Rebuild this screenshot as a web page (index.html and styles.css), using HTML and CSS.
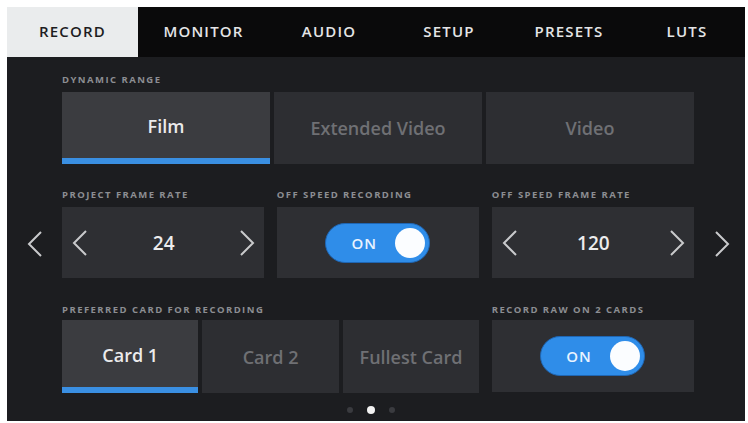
FILE: index.html
```html
<!DOCTYPE html>
<html>
<head>
<meta charset="utf-8">
<link rel="stylesheet" href="styles.css">
</head>
<body>
<div class="screen">
  <nav class="tabs">
    <div class="tab active">RECORD</div>
    <div class="tab">MONITOR</div>
    <div class="tab">AUDIO</div>
    <div class="tab">SETUP</div>
    <div class="tab">PRESETS</div>
    <div class="tab">LUTS</div>
  </nav>
  <main class="content">
    <section class="field sec1">
      <div class="label">DYNAMIC RANGE</div>
      <div class="seg seg3">
        <div class="btn on">Film</div>
        <div class="btn">Extended Video</div>
        <div class="btn">Video</div>
      </div>
    </section>

    <div class="nav left">
      <svg width="16" height="26" viewBox="0 0 16 26"><path d="M14 1 L2 13 L14 25" fill="none" stroke="#c9cacc" stroke-width="2"/></svg>
    </div>
    <section class="row2">
      <div class="field">
        <div class="label">PROJECT FRAME RATE</div>
        <div class="box stepper">
          <svg width="16" height="26" viewBox="0 0 16 26"><path d="M14 1 L2 13 L14 25" fill="none" stroke="#c9cacc" stroke-width="2"/></svg>
          <span class="val">24</span>
          <svg width="16" height="26" viewBox="0 0 16 26"><path d="M2 1 L14 13 L2 25" fill="none" stroke="#c9cacc" stroke-width="2"/></svg>
        </div>
      </div>
      <div class="field">
        <div class="label">OFF SPEED RECORDING</div>
        <div class="box center">
          <div class="toggle"><span>ON</span><i class="knob"></i></div>
        </div>
      </div>
      <div class="field">
        <div class="label">OFF SPEED FRAME RATE</div>
        <div class="box stepper">
          <svg width="16" height="26" viewBox="0 0 16 26"><path d="M14 1 L2 13 L14 25" fill="none" stroke="#c9cacc" stroke-width="2"/></svg>
          <span class="val">120</span>
          <svg width="16" height="26" viewBox="0 0 16 26"><path d="M2 1 L14 13 L2 25" fill="none" stroke="#c9cacc" stroke-width="2"/></svg>
        </div>
      </div>
    </section>
    <div class="nav right">
      <svg width="16" height="26" viewBox="0 0 16 26"><path d="M2 1 L14 13 L2 25" fill="none" stroke="#c9cacc" stroke-width="2"/></svg>
    </div>

    <section class="row3">
      <div class="field span2">
        <div class="label">PREFERRED CARD FOR RECORDING</div>
        <div class="seg seg3 cards">
          <div class="btn on">Card 1</div>
          <div class="btn">Card 2</div>
          <div class="btn">Fullest Card</div>
        </div>
      </div>
      <div class="field">
        <div class="label">RECORD RAW ON 2 CARDS</div>
        <div class="box center tall">
          <div class="toggle"><span>ON</span><i class="knob"></i></div>
        </div>
      </div>
    </section>

    <div class="dots"><i></i><i class="cur"></i><i></i></div>
  </main>
</div>
</body>
</html>
```

FILE: styles.css
```css
* { box-sizing: border-box; }
html, body { margin: 0; padding: 0; background: #ffffff; }
body { font-family: "Open Sans", "Liberation Sans", sans-serif; }

.screen {
  margin: 7px 0 0 7px;
  width: 738px;
  height: 414px;
  background: #1c1d20;
  overflow: hidden;
}

.tabs {
  display: grid;
  grid-template-columns: 131px 131px 120px 120px 120px 116px;
  height: 50px;
  background: #0a0a0b;
}
.tab {
  display: flex;
  align-items: center;
  justify-content: center;
  color: #e4e5e6;
  font-size: 15px;
  font-weight: 600;
  letter-spacing: 1.2px;
  padding-bottom: 2px;
}
.tab.active { background: #eaeced; color: #1d1d1f; }

.content {
  display: grid;
  grid-template-columns: 55px 632px 51px;
  padding-top: 17px;
}
.sec1 { grid-column: 2; grid-row: 1; }
.nav.left { grid-column: 1; grid-row: 2; }
.row2 { grid-column: 2; grid-row: 2; margin-top: 25px; }
.nav.right { grid-column: 3; grid-row: 2; }
.row3 { grid-column: 2; grid-row: 3; margin-top: 26px; }
.dots { grid-column: 2; grid-row: 4; }

.nav {
  margin-top: 25px;
  display: flex;
  align-items: flex-end;
  padding-bottom: 21px;
}
.nav.left { justify-content: flex-end; padding-right: 19px; }
.nav.right { padding-left: 20px; }

.field { display: flex; flex-direction: column; }
.label {
  color: #8c8e92;
  font-size: 9.5px;
  font-weight: 700;
  letter-spacing: 1.45px;
  line-height: 12px;
  height: 12px;
  margin-bottom: 6px;
  white-space: nowrap;
}
.row3 .label { margin-bottom: 4px; }

.seg { display: grid; gap: 4px; }
.seg3 { grid-template-columns: repeat(3, 1fr); }
.btn {
  height: 72px;
  background: #2d2e32;
  color: #6f7074;
  font-size: 18px;
  font-weight: 600;
  display: flex;
  align-items: center;
  justify-content: center;
}
.btn.on {
  background: #3b3c40;
  color: #ebebec;
  border-bottom: 6px solid #3a8fe2;
  padding-top: 2px;
}
.cards .btn { height: 73px; }
.cards .btn.on { padding-top: 3px; }

.row2, .row3 {
  display: grid;
  grid-template-columns: repeat(3, 1fr);
  column-gap: 12.5px;
}
.span2 { grid-column: span 2; }

.box {
  height: 71px;
  background: #2e2f33;
  display: flex;
  align-items: center;
}
.box.tall { height: 72px; }
.center { justify-content: center; }
.stepper { justify-content: space-between; padding: 0 9px 0 10px; }
.val { color: #ececed; font-size: 19px; font-weight: 600; }

.toggle {
  width: 105px;
  height: 40px;
  border-radius: 20px;
  background: #2f8de9;
  border: 1px solid #1f66b3;
  display: flex;
  align-items: center;
  justify-content: space-between;
  padding: 0 4px 0 25px;
}
.toggle span {
  color: #e9f3ff;
  font-size: 15px;
  font-weight: 600;
  letter-spacing: 1px;
}
.knob {
  width: 30px;
  height: 30px;
  border-radius: 50%;
  background: #fbfdff;
  display: block;
}

.dots {
  display: flex;
  justify-content: center;
  align-items: center;
  gap: 14px;
  margin-top: 13px;
  height: 8px;
  padding-right: 14px;
}
.dots i { display: block; width: 6px; height: 6px; border-radius: 50%; background: #3a3b3f; }
.dots i.cur { width: 8px; height: 8px; background: #f2f2f2; }
```
